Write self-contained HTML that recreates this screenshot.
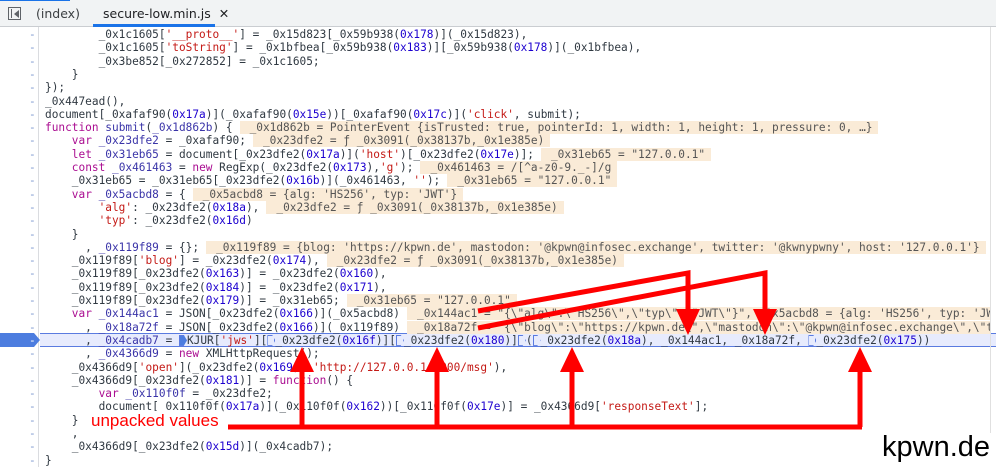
<!DOCTYPE html>
<html><head><meta charset="utf-8"><style>
*{margin:0;padding:0;box-sizing:border-box}
body{width:996px;height:467px;overflow:hidden;background:#fff;position:relative;font-family:"DejaVu Sans Mono","Liberation Mono",monospace;font-size:11.13px;color:#303942}
.tab{position:absolute;left:0;top:0;width:996px;height:27px;background:#f1f3f4;border-bottom:1px solid #cacdd1;z-index:5;font-family:"DejaVu Sans","Liberation Sans",sans-serif;font-size:12.5px;color:#3c4043}
.row{position:absolute;left:0;height:13.3px;line-height:13.3px;width:996px;white-space:pre}
.g{position:absolute;left:29px;color:#7f9ad0;width:8px}
.c{position:absolute;left:45px;right:6px;overflow:hidden}
.gl{position:absolute;left:38px;top:27px;width:1px;height:440px;background:#dadce0}
.k{color:#aa0d91}.n{color:#1c00cf}.s{color:#c41a16}.d{color:#3a34a8}
.a{background:#faebd7;color:#555;padding-left:10px;padding-right:6px;margin-left:7px}
.m{display:inline-block;width:8px;height:11px;vertical-align:-2px;margin-right:0;border:1px solid #5a7be0;clip-path:polygon(0 0,60% 0,100% 50%,60% 100%,0 100%);background:#e7ebfd}
</style></head><body>
<div class="tab">
 <div style="position:absolute;left:8px;top:7px;width:13px;height:13px;border:1px solid #5f6368"></div>
 <div style="position:absolute;left:11px;top:9px;width:1px;height:9px;background:#5f6368"></div>
 <div style="position:absolute;left:14px;top:10px;width:0;height:0;border-top:4px solid transparent;border-bottom:4px solid transparent;border-right:5px solid #5f6368"></div>
 <div style="position:absolute;left:36px;top:6px">(index)</div>
 <div style="position:absolute;left:103px;top:6px;color:#202124">secure-low.min.js <span style="margin-left:4px">✕</span></div>
 <div style="position:absolute;left:93px;top:24px;width:122px;height:3px;background:#1a73e8"></div>
 <div style="position:absolute;left:0;top:0;width:70px;height:1px;background:#1a73e8"></div>
</div>
<div class="gl"></div>
<div style="position:absolute;left:40px;top:333px;width:956px;height:14px;background:#e7ebfd;border-top:1px solid #5a7be0;border-bottom:1px solid #5a7be0"></div>
<div style="position:absolute;left:0;top:333px;width:40px;height:14px;background:#4d7ddf;clip-path:polygon(0 0,85% 0,100% 50%,85% 100%,0 100%)"></div>

<div class="row" style="top:28px"><span class="g">-</span><span class="c">        _0x1c1605[<span class="s">'__proto__'</span>] = _0x15d823[_0x59b938(<span class="n">0x178</span>)](_0x15d823),</span></div>
<div class="row" style="top:41.3px"><span class="g">-</span><span class="c">        _0x1c1605[<span class="s">'toString'</span>] = _0x1bfbea[_0x59b938(<span class="n">0x183</span>)][_0x59b938(<span class="n">0x178</span>)](_0x1bfbea),</span></div>
<div class="row" style="top:54.6px"><span class="g">-</span><span class="c">        _0x3be852[_0x272852] = _0x1c1605;</span></div>
<div class="row" style="top:67.9px"><span class="g">-</span><span class="c">    }</span></div>
<div class="row" style="top:81.2px"><span class="g">-</span><span class="c">});</span></div>
<div class="row" style="top:94.5px"><span class="g">-</span><span class="c">_0x447ead(),</span></div>
<div class="row" style="top:107.8px"><span class="g">-</span><span class="c">document[_0xafaf90(<span class="n">0x17a</span>)](_0xafaf90(<span class="n">0x15e</span>))[_0xafaf90(<span class="n">0x17c</span>)](<span class="s">'click'</span>, submit);</span></div>
<div class="row" style="top:121.1px"><span class="g">-</span><span class="c"><span class="k">function</span> <span class="d">submit</span>(<span class="d">_0x1d862b</span>) {<span class="a">_0x1d862b = PointerEvent {isTrusted: true, pointerId: 1, width: 1, height: 1, pressure: 0, …}</span></span></div>
<div class="row" style="top:134.4px"><span class="g">-</span><span class="c">    <span class="k">var</span> <span class="d">_0x23dfe2</span> = _0xafaf90;<span class="a">_0x23dfe2 = ƒ _0x3091(_0x38137b,_0x1e385e)</span></span></div>
<div class="row" style="top:147.7px"><span class="g">-</span><span class="c">    <span class="k">let</span> <span class="d">_0x31eb65</span> = document[_0x23dfe2(<span class="n">0x17a</span>)](<span class="s">'host'</span>)[_0x23dfe2(<span class="n">0x17e</span>)];<span class="a">_0x31eb65 = "127.0.0.1"</span></span></div>
<div class="row" style="top:161px"><span class="g">-</span><span class="c">    <span class="k">const</span> <span class="d">_0x461463</span> = <span class="k">new</span> RegExp(_0x23dfe2(<span class="n">0x173</span>),<span class="s">'g'</span>);<span class="a">_0x461463 = /[^a-z0-9._-]/g</span></span></div>
<div class="row" style="top:174.3px"><span class="g">-</span><span class="c">    _0x31eb65 = _0x31eb65[_0x23dfe2(<span class="n">0x16b</span>)](_0x461463, <span class="s">''</span>);<span class="a">_0x31eb65 = "127.0.0.1"</span></span></div>
<div class="row" style="top:187.6px"><span class="g">-</span><span class="c">    <span class="k">var</span> <span class="d">_0x5acbd8</span> = {<span class="a">_0x5acbd8 = {alg: 'HS256', typ: 'JWT'}</span></span></div>
<div class="row" style="top:200.9px"><span class="g">-</span><span class="c">        <span class="s">'alg'</span>: _0x23dfe2(<span class="n">0x18a</span>),<span class="a">_0x23dfe2 = ƒ _0x3091(_0x38137b,_0x1e385e)</span></span></div>
<div class="row" style="top:214.2px"><span class="g">-</span><span class="c">        <span class="s">'typ'</span>: _0x23dfe2(<span class="n">0x16d</span>)</span></div>
<div class="row" style="top:227.5px"><span class="g">-</span><span class="c">    }</span></div>
<div class="row" style="top:240.8px"><span class="g">-</span><span class="c">      , <span class="d">_0x119f89</span> = {};<span class="a">_0x119f89 = {blog: 'https://kpwn.de', mastodon: '@kpwn@infosec.exchange', twitter: '@kwnypwny', host: '127.0.0.1'}</span></span></div>
<div class="row" style="top:254.1px"><span class="g">-</span><span class="c">    _0x119f89[<span class="s">'blog'</span>] = _0x23dfe2(<span class="n">0x174</span>),<span class="a">_0x23dfe2 = ƒ _0x3091(_0x38137b,_0x1e385e)</span></span></div>
<div class="row" style="top:267.4px"><span class="g">-</span><span class="c">    _0x119f89[_0x23dfe2(<span class="n">0x163</span>)] = _0x23dfe2(<span class="n">0x160</span>),</span></div>
<div class="row" style="top:280.7px"><span class="g">-</span><span class="c">    _0x119f89[_0x23dfe2(<span class="n">0x184</span>)] = _0x23dfe2(<span class="n">0x171</span>),</span></div>
<div class="row" style="top:294px"><span class="g">-</span><span class="c">    _0x119f89[_0x23dfe2(<span class="n">0x179</span>)] = _0x31eb65;<span class="a">_0x31eb65 = "127.0.0.1"</span></span></div>
<div class="row" style="top:307.3px"><span class="g">-</span><span class="c">    <span class="k">var</span> <span class="d">_0x144ac1</span> = JSON[_0x23dfe2(<span class="n">0x166</span>)](_0x5acbd8)<span class="a">_0x144ac1 = "{\"alg\":\"HS256\",\"typ\":\"JWT\"}", _0x5acbd8 = {alg: 'HS256', typ: 'JWT'}</span></span></div>
<div class="row" style="top:320.6px"><span class="g">-</span><span class="c">      , <span class="d">_0x18a72f</span> = JSON[_0x23dfe2(<span class="n">0x166</span>)](_0x119f89)<span class="a">_0x18a72f = "{\"blog\":\"https://kpwn.de\",\"mastodon\":\"@kpwn@infosec.exchange\",\"twitter\"</span></span></div>
<div class="row" style="top:333.9px"><span class="g" style="color:#fff">-</span><span class="c">      , <span class="d">_0x4cadb7</span> = <span class="m" style="background:#4d7ddf"></span>KJUR[<span class="s">'jws'</span>][<span class="m"></span>_0x23dfe2(<span class="n">0x16f</span>)][<span class="m"></span>_0x23dfe2(<span class="n">0x180</span>)]<span class="m"></span>(<span class="m"></span>_0x23dfe2(<span class="n">0x18a</span>), _0x144ac1, _0x18a72f, <span class="m"></span>_0x23dfe2(<span class="n">0x175</span>))</span></div>
<div class="row" style="top:347.2px"><span class="g">-</span><span class="c">      , <span class="d">_0x4366d9</span> = <span class="k">new</span> XMLHttpRequest();</span></div>
<div class="row" style="top:360.5px"><span class="g">-</span><span class="c">    _0x4366d9[<span class="s">'open'</span>](_0x23dfe2(<span class="n">0x169</span>), <span class="s">'http://127.0.0.1:8000/msg'</span>),</span></div>
<div class="row" style="top:373.8px"><span class="g">-</span><span class="c">    _0x4366d9[_0x23dfe2(<span class="n">0x181</span>)] = <span class="k">function</span>() {</span></div>
<div class="row" style="top:387.1px"><span class="g">-</span><span class="c">        <span class="k">var</span> <span class="d">_0x110f0f</span> = _0x23dfe2;</span></div>
<div class="row" style="top:400.4px"><span class="g">-</span><span class="c">        document[_0x110f0f(<span class="n">0x17a</span>)](_0x110f0f(<span class="n">0x162</span>))[_0x110f0f(<span class="n">0x17e</span>)] = _0x4366d9[<span class="s">'responseText'</span>];</span></div>
<div class="row" style="top:413.7px"><span class="g">-</span><span class="c">    }</span></div>
<div class="row" style="top:427px"><span class="g">-</span><span class="c">    ,</span></div>
<div class="row" style="top:440.3px"><span class="g">-</span><span class="c">    _0x4366d9[_0x23dfe2(<span class="n">0x15d</span>)](_0x4cadb7);</span></div>
<div class="row" style="top:453.6px"><span class="g">-</span><span class="c">}</span></div>

<div style="position:absolute;left:990px;top:27px;width:1px;height:440px;background:#e0e0e0"></div>
<div style="position:absolute;left:876px;top:433px;width:120px;height:34px;background:#fff"></div>
<div style="position:absolute;left:882px;top:431px;font-family:'Liberation Sans',sans-serif;font-size:29px;color:#000">kpwn.de</div>
<div style="position:absolute;left:90px;top:411px;font-family:'Liberation Sans',sans-serif;font-size:17px;color:#f00;background:#fff;padding:0 1px">unpacked values</div>

<svg width="996" height="467" style="position:absolute;left:0;top:0;z-index:3" fill="#f00" stroke="#f00">
<g stroke-width="5" fill="none">
<path d="M228 427 H862"/>
<path d="M302 427 V368 M437 427 V368 M572 427 V368 M860 427 V368"/>
<path d="M478 311 L688 273 V312"/>
<path d="M478 328 L765 273 V312"/>
</g>
<g stroke="none">
<path d="M302 347 L290 372 L314 372Z"/>
<path d="M437 347 L425 372 L449 372Z"/>
<path d="M572 347 L560 372 L584 372Z"/>
<path d="M860 347 L848 372 L872 372Z"/>
<path d="M688 335 L676 309 L700 309Z"/>
<path d="M765 335 L753 309 L777 309Z"/>
</g>
</svg>
</body></html>
